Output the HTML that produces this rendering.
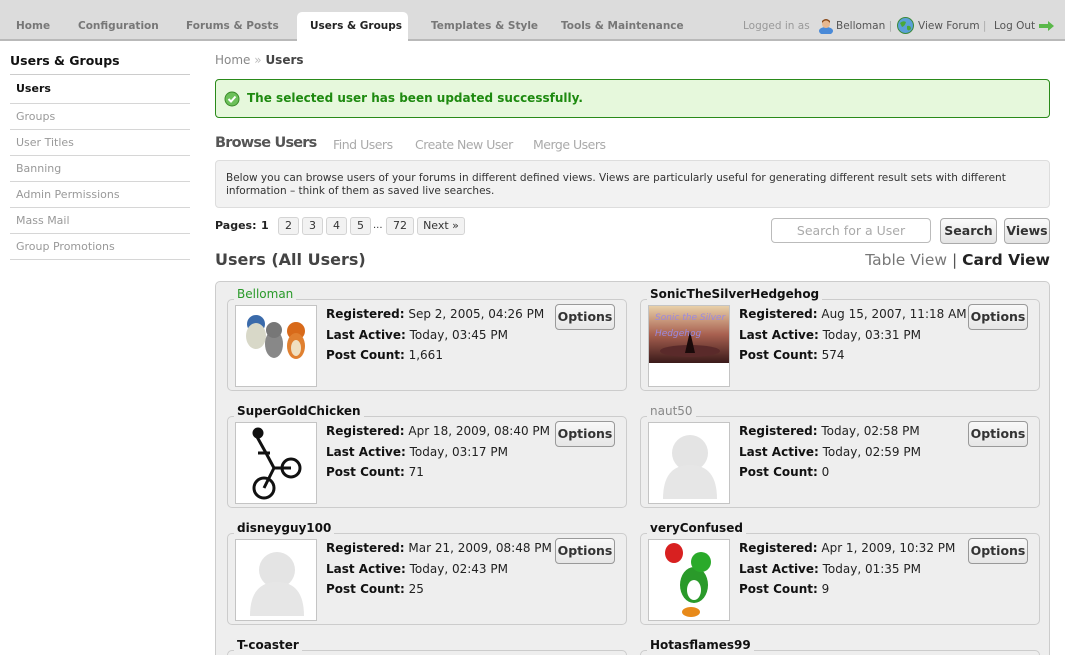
<!DOCTYPE html>
<html style="width:1065px;height:655px;overflow:hidden"><head><meta charset="utf-8"><style>
*{box-sizing:border-box;margin:0;padding:0}
body{width:1065px;height:655px;overflow:hidden;background:#fff;font-family:"DejaVu Sans",Verdana,sans-serif;position:relative;color:#222}
.a{position:absolute;white-space:nowrap}
#top{position:absolute;left:0;top:0;width:1065px;height:41px;background:#dcdcdc;border-bottom:2px solid #b9b9b9}
.tab{position:absolute;top:20px;font-size:10.5px;font-weight:bold;color:#777}
#act{position:absolute;left:297px;top:12px;width:111px;height:30px;background:#fff;border-radius:5px 5px 0 0}
.side{position:absolute;left:10px;width:180px;border-bottom:1px solid #d6d6d6;font-size:11px;color:#999;padding-left:6px}
.pg{position:absolute;top:217px;height:18px;border:1px solid #d4d4d4;background:#f2f2f2;border-radius:3px;font-size:11px;text-align:center;line-height:16px;color:#333}
.btn{position:absolute;border:1px solid #aaa;border-radius:4px;background:linear-gradient(#fafafa,#e4e4e4);font-size:12.5px;font-weight:bold;color:#333;text-align:center}
.card{position:absolute;width:400px;height:92px;border:1px solid #ccc;border-radius:5px}
.lg{position:absolute;left:6px;top:-14px;background:#eee;padding:0 3px;font-size:12px;font-weight:bold;color:#111;line-height:16px}
.av{position:absolute;left:7px;top:5px;width:82px;height:82px;background:#fff;border:1px solid #c4c4c4;overflow:hidden}
.tx{position:absolute;left:98px;top:4px;font-size:12px;line-height:20.5px;color:#222;white-space:nowrap}
.tx b{color:#111}
.op{position:absolute;left:327px;top:4px;width:60px;height:26px;border:1px solid #999;border-radius:4px;background:linear-gradient(#f8f8f8,#e6e6e6);font-size:12.5px;font-weight:bold;color:#333;text-align:center;line-height:24px}
</style></head><body>
<div id="top"></div>
<div id="act"></div>
<div class="tab" style="left:16px">Home</div>
<div class="tab" style="left:78px">Configuration</div>
<div class="tab" style="left:186px">Forums &amp; Posts</div>
<div class="tab" style="left:310px;color:#222">Users &amp; Groups</div>
<div class="tab" style="left:431px">Templates &amp; Style</div>
<div class="tab" style="left:561px">Tools &amp; Maintenance</div>
<div class="a" style="left:743px;top:20px;font-size:10.5px;color:#999">Logged in as</div>
<svg class="a" style="left:818px;top:17px" width="16" height="17"><ellipse cx="8" cy="14" rx="7" ry="4" fill="#4a8ad8"/><circle cx="8" cy="7" r="4" fill="#e8b890"/><path d="M4 6 Q8 1 12 6 L12 4 Q8 0 4 4Z" fill="#8a4a1a"/></svg>
<div class="a" style="left:836px;top:20px;font-size:10.5px;color:#555">Belloman <span style="color:#aaa">|</span></div>
<svg class="a" style="left:897px;top:17px" width="17" height="17"><circle cx="8.5" cy="8.5" r="8" fill="#5aa0d8" stroke="#3a8a3a"/><path d="M3 6 Q6 3 9 5 Q8 9 5 10Z M10 9 Q14 8 14 12 Q11 15 10 12Z" fill="#4aa83a"/></svg>
<div class="a" style="left:918px;top:20px;font-size:10.5px;color:#555">View Forum <span style="color:#aaa">|</span></div>
<div class="a" style="left:994px;top:20px;font-size:10.5px;color:#555">Log Out</div>
<svg class="a" style="left:1039px;top:21px" width="16" height="10"><path d="M0 3H9V0L15 5L9 10V7H0Z" fill="#5ab84a"/></svg>

<div class="a" style="left:10px;top:53px;font-size:12.5px;font-weight:bold;color:#111">Users &amp; Groups</div>
<div class="side" style="top:74px;height:0;border-bottom:1px solid #ccc"></div>
<div class="side" style="top:75px;height:29px;line-height:27px;color:#111;font-weight:bold">Users</div>
<div class="side" style="top:104px;height:26px;line-height:26px">Groups</div>
<div class="side" style="top:130px;height:26px;line-height:26px">User Titles</div>
<div class="side" style="top:156px;height:26px;line-height:26px">Banning</div>
<div class="side" style="top:182px;height:26px;line-height:26px">Admin Permissions</div>
<div class="side" style="top:208px;height:26px;line-height:26px">Mass Mail</div>
<div class="side" style="top:234px;height:26px;line-height:26px">Group Promotions</div>

<div class="a" style="left:215px;top:53px;font-size:12px;color:#888">Home <span style="color:#bbb">»</span> <b style="color:#444">Users</b></div>
<div class="a" style="left:215px;top:79px;width:835px;height:39px;background:#e6f8dc;border:1px solid #2a8a1a;border-radius:4px"></div>
<svg class="a" style="left:224px;top:91px" width="16" height="16"><circle cx="8" cy="8" r="7" fill="#6cc05a" stroke="#3a8a2a"/><path d="M4.5 8L7 10.5L11.5 5.5" stroke="#fff" stroke-width="2" fill="none"/></svg>
<div class="a" style="left:247px;top:91px;font-size:12px;font-weight:bold;color:#1e8a10">The selected user has been updated successfully.</div>

<div class="a" style="left:215px;top:135px;font-size:14.5px;font-weight:bold;color:#555;letter-spacing:-0.8px">Browse Users</div>
<div class="a" style="left:333px;top:137px;font-size:12.5px;color:#aaa;letter-spacing:-0.5px">Find Users</div>
<div class="a" style="left:415px;top:137px;font-size:12.5px;color:#aaa;letter-spacing:-0.5px">Create New User</div>
<div class="a" style="left:533px;top:137px;font-size:12.5px;color:#aaa;letter-spacing:-0.5px">Merge Users</div>
<div class="a" style="left:215px;top:160px;width:835px;height:48px;background:#f2f2f2;border:1px solid #ddd;border-radius:4px;font-size:10.5px;color:#333;padding:11px 10px;line-height:13px;white-space:normal">Below you can browse users of your forums in different defined views. Views are particularly useful for generating different result sets with different information – think of them as saved live searches.</div>

<div class="a" style="left:215px;top:219px;font-size:11px;font-weight:bold;color:#222">Pages:</div>
<div class="a" style="left:261px;top:219px;font-size:11px;font-weight:bold;color:#222">1</div>
<div class="pg" style="left:278px;width:21px">2</div>
<div class="pg" style="left:302px;width:21px">3</div>
<div class="pg" style="left:326px;width:21px">4</div>
<div class="pg" style="left:350px;width:21px">5</div>
<div class="a" style="left:373px;top:220px;font-size:10px;color:#333">...</div>
<div class="pg" style="left:386px;width:28px">72</div>
<div class="pg" style="left:417px;width:48px">Next »</div>

<div class="a" style="left:771px;top:218px;width:160px;height:25px;border:1px solid #bbb;border-radius:4px;font-size:12.5px;color:#aaa;text-align:center;line-height:23px">Search for a User</div>
<div class="btn" style="left:940px;top:218px;width:57px;height:26px;line-height:24px">Search</div>
<div class="btn" style="left:1004px;top:218px;width:46px;height:26px;line-height:24px">Views</div>

<div class="a" style="left:215px;top:250px;font-size:16px;font-weight:bold;color:#444">Users (All Users)</div>
<div class="a" style="right:15px;top:251px;font-size:15.5px;color:#777">Table View <span style="color:#555">|</span> <b style="color:#222">Card View</b></div>

<div class="a" style="left:215px;top:281px;width:835px;height:400px;background:#eee;border:1px solid #ccc;border-radius:5px"></div>

<div class="card" style="left:227px;top:299px"><div class="lg" style="color:#2a9a2a;font-weight:normal">Belloman</div>
<div class="av"><svg width="82" height="82"><circle cx="20" cy="18" r="9" fill="#3a6aaa"/><ellipse cx="20" cy="30" rx="10" ry="13" fill="#d8d8c8"/><ellipse cx="38" cy="38" rx="9" ry="14" fill="#888"/><circle cx="38" cy="24" r="8" fill="#777"/><circle cx="60" cy="25" r="9" fill="#d86a1a"/><ellipse cx="60" cy="40" rx="9" ry="13" fill="#e08030"/><ellipse cx="60" cy="42" rx="5" ry="8" fill="#f0e0c0"/></svg></div>
<div class="tx"><b>Registered:</b> Sep 2, 2005, 04:26 PM<br><b>Last Active:</b> Today, 03:45 PM<br><b>Post Count:</b> 1,661</div><div class="op">Options</div></div>
<div class="card" style="left:640px;top:299px"><div class="lg">SonicTheSilverHedgehog</div>
<div class="av"><svg width="82" height="82"><defs><linearGradient id="g1" x1="0" y1="0" x2="0" y2="1"><stop offset="0" stop-color="#e8d0a8"/><stop offset=".5" stop-color="#a86050"/><stop offset="1" stop-color="#3a1a1a"/></linearGradient></defs><rect width="82" height="57" fill="url(#g1)"/><ellipse cx="41" cy="45" rx="30" ry="6" fill="#5a2a2a"/><path d="M36 47 L41 25 L46 47Z" fill="#1a0a0a"/><text x="6" y="14" font-size="9" fill="#9a8ae0" font-style="italic">Sonic the Silver</text><text x="6" y="30" font-size="9" fill="#9a8ae0" font-style="italic">Hedgehog</text></svg></div>
<div class="tx"><b>Registered:</b> Aug 15, 2007, 11:18 AM<br><b>Last Active:</b> Today, 03:31 PM<br><b>Post Count:</b> 574</div><div class="op">Options</div></div>

<div class="card" style="left:227px;top:416px"><div class="lg">SuperGoldChicken</div>
<div class="av"><svg width="82" height="82" fill="none" stroke="#111" stroke-width="3"><circle cx="28" cy="65" r="10"/><circle cx="55" cy="45" r="9"/><path d="M28 65L38 45L55 45M38 45L30 30L20 12M22 30L34 30"/><circle cx="22" cy="10" r="4" fill="#111"/></svg></div>
<div class="tx"><b>Registered:</b> Apr 18, 2009, 08:40 PM<br><b>Last Active:</b> Today, 03:17 PM<br><b>Post Count:</b> 71</div><div class="op">Options</div></div>
<div class="card" style="left:640px;top:416px"><div class="lg" style="color:#888;font-weight:normal">naut50</div>
<div class="av"><svg width="82" height="82"><circle cx="41" cy="30" r="18" fill="#e4e4e4"/><path d="M14 76 Q14 42 41 42 Q68 42 68 76Z" fill="#e6e6e6"/></svg></div>
<div class="tx"><b>Registered:</b> Today, 02:58 PM<br><b>Last Active:</b> Today, 02:59 PM<br><b>Post Count:</b> 0</div><div class="op">Options</div></div>

<div class="card" style="left:227px;top:533px"><div class="lg">disneyguy100</div>
<div class="av"><svg width="82" height="82"><circle cx="41" cy="30" r="18" fill="#e4e4e4"/><path d="M14 76 Q14 42 41 42 Q68 42 68 76Z" fill="#e6e6e6"/></svg></div>
<div class="tx"><b>Registered:</b> Mar 21, 2009, 08:48 PM<br><b>Last Active:</b> Today, 02:43 PM<br><b>Post Count:</b> 25</div><div class="op">Options</div></div>
<div class="card" style="left:640px;top:533px"><div class="lg">veryConfused</div>
<div class="av"><svg width="82" height="82"><ellipse cx="25" cy="13" rx="9" ry="10" fill="#d82020"/><ellipse cx="45" cy="45" rx="14" ry="18" fill="#2a9a2a"/><circle cx="52" cy="22" r="10" fill="#2aaa2a"/><ellipse cx="45" cy="50" rx="7" ry="10" fill="#fff"/><ellipse cx="42" cy="72" rx="9" ry="5" fill="#e88a1a"/></svg></div>
<div class="tx"><b>Registered:</b> Apr 1, 2009, 10:32 PM<br><b>Last Active:</b> Today, 01:35 PM<br><b>Post Count:</b> 9</div><div class="op">Options</div></div>

<div class="card" style="left:227px;top:650px"><div class="lg">T-coaster</div></div>
<div class="card" style="left:640px;top:650px"><div class="lg">Hotasflames99</div></div>
</body></html>
